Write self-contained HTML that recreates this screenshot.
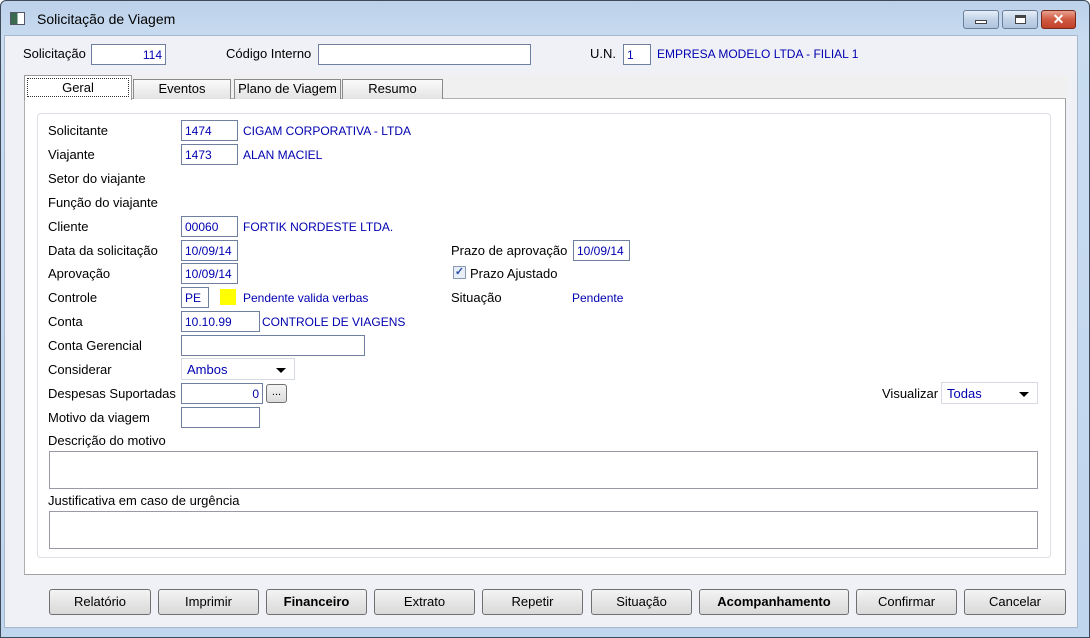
<!DOCTYPE html>
<html><head><meta charset="utf-8"><style>
*{margin:0;padding:0;box-sizing:border-box}
body{width:1090px;height:638px;overflow:hidden;background:#fff;font-family:"Liberation Sans",sans-serif;font-size:12px;color:#000;position:relative}
.a{position:absolute;white-space:nowrap}
.frame{position:absolute;left:0;top:0;width:1090px;height:638px;background:linear-gradient(#bcd1ea,#c9dcf0 40px,#c0d5ee);border:1px solid #3c4a5a;border-radius:6px 6px 0 0}
.body{position:absolute;left:4px;top:35px;width:1074px;height:593px;background:#f0f0f7;border:1px solid #a8b8cc}
.in{position:absolute;height:21px;background:#fff;border:1px solid #6f7fa0;color:#0000b0;padding:1px 3px;line-height:18px}
.bl{color:#0000b0}
.btn{position:absolute;top:589px;height:26px;border:1px solid #707070;border-radius:3px;background:linear-gradient(#f4f4f4,#e6e6e6 50%,#d9d9d9);text-align:center;line-height:24px;font-size:13px}
.tab{position:absolute;top:79px;height:20px;border:1px solid #8a8a8a;border-bottom:none;background:linear-gradient(#fafafa,#e3e3e3);text-align:center;line-height:18px;font-size:13px}
.lab{position:absolute;left:48px;font-size:13px}
.dd{position:absolute;height:22px;background:#fff;border:1px solid #d6dbe3;color:#0000b0;padding:3px 5px;font-size:13px}
.dd:after{content:"";position:absolute;right:8px;top:9px;border-left:5px solid transparent;border-right:5px solid transparent;border-top:5px solid #000}
.wb{position:absolute;top:10px;height:19px;border:1px solid #6c7f98;border-radius:3px;background:linear-gradient(#e6eef8,#c2d3e8 50%,#aec4de)}
</style></head><body>
<div class="frame"></div>
<div class="a" style="left:10px;top:12px;width:15px;height:13px;border:1px solid #556;background:linear-gradient(90deg,#3a6a50 50%,#fff 50%)"></div>
<div class="a" style="left:37px;top:11px;font-size:14px;color:#000">Solicitação de Viagem</div>
<div class="wb" style="left:963px;width:36px"><div class="a" style="left:11px;top:9px;width:12px;height:4px;border:1px solid #444;background:#fff"></div></div>
<div class="wb" style="left:1002px;width:36px"><div class="a" style="left:12px;top:4px;width:11px;height:9px;border:1px solid #444;border-top-width:3px;background:#fff"></div></div>
<div class="wb" style="left:1041px;width:35px;background:linear-gradient(#e8a090,#d05a40 50%,#c04028);border-color:#7a2a1a;color:#fff;font-weight:bold;text-align:center;line-height:16px;font-size:14px">✕</div>
<div class="body"></div>
<div class="a" style="left:23px;top:46px;font-size:13px">Solicitação</div>
<div class="in" style="left:91px;top:44px;width:75px;text-align:right">114</div>
<div class="a" style="left:226px;top:46px;font-size:13px">Código Interno</div>
<div class="in" style="left:318px;top:44px;width:213px"></div>
<div class="a" style="left:590px;top:46px;font-size:13px">U.N.</div>
<div class="in" style="left:623px;top:44px;width:28px">1</div>
<div class="a bl" style="left:657px;top:47px">EMPRESA MODELO LTDA - FILIAL 1</div>
<div class="a" style="left:24px;top:75px;width:1044px;height:24px;background:#f0f0f0"></div>
<div class="a" style="left:24px;top:98px;width:1042px;height:477px;background:#fff;border:1px solid #b0b0b0;border-right-color:#a0a0a0;border-bottom-color:#a0a0a0"></div>
<div class="tab" style="left:133px;width:98px">Eventos</div>
<div class="tab" style="left:234px;width:107px">Plano de Viagem</div>
<div class="tab" style="left:342px;width:101px">Resumo</div>
<div class="tab" style="left:24px;top:75px;width:108px;height:25px;background:#fff;border-color:#999"><div style="margin:2px;border:1px dotted #333;height:19px;line-height:17px">Geral</div></div>
<div class="a" style="left:37px;top:113px;width:1014px;height:445px;border:1px solid #dcdfe6;border-radius:4px"></div>
<div class="lab" style="top:123px">Solicitante</div>
<div class="in" style="left:181px;top:120px;width:57px">1474</div>
<div class="a bl" style="left:243px;top:124px">CIGAM CORPORATIVA - LTDA</div>
<div class="lab" style="top:147px">Viajante</div>
<div class="in" style="left:181px;top:144px;width:57px">1473</div>
<div class="a bl" style="left:243px;top:148px">ALAN MACIEL</div>
<div class="lab" style="top:171px">Setor do viajante</div>
<div class="lab" style="top:195px">Função do viajante</div>
<div class="lab" style="top:219px">Cliente</div>
<div class="in" style="left:181px;top:216px;width:57px">00060</div>
<div class="a bl" style="left:243px;top:220px">FORTIK NORDESTE LTDA.</div>
<div class="lab" style="top:243px">Data da solicitação</div>
<div class="in" style="left:181px;top:240px;width:57px">10/09/14</div>
<div class="a" style="left:451px;top:243px;font-size:13px">Prazo de aprovação</div>
<div class="in" style="left:573px;top:240px;width:57px">10/09/14</div>
<div class="lab" style="top:266px">Aprovação</div>
<div class="in" style="left:181px;top:263px;width:57px">10/09/14</div>
<div class="a" style="left:453px;top:266px;width:13px;height:13px;border:1px solid #8a9ab0;background:#e8eef8;color:#2a50a0;font-size:11px;line-height:11px;text-align:center;font-weight:bold">✓</div>
<div class="a" style="left:470px;top:266px;font-size:13px">Prazo Ajustado</div>
<div class="lab" style="top:290px">Controle</div>
<div class="in" style="left:181px;top:287px;width:28px">PE</div>
<div class="a" style="left:220px;top:289px;width:16px;height:16px;background:#ffff00"></div>
<div class="a bl" style="left:243px;top:291px">Pendente valida verbas</div>
<div class="a" style="left:451px;top:290px;font-size:13px">Situação</div>
<div class="a bl" style="left:572px;top:291px">Pendente</div>
<div class="lab" style="top:314px">Conta</div>
<div class="in" style="left:181px;top:311px;width:79px">10.10.99</div>
<div class="a bl" style="left:262px;top:315px">CONTROLE DE VIAGENS</div>
<div class="lab" style="top:338px">Conta Gerencial</div>
<div class="in" style="left:181px;top:335px;width:184px"></div>
<div class="lab" style="top:362px">Considerar</div>
<div class="dd" style="left:181px;top:358px;width:114px">Ambos</div>
<div class="lab" style="top:386px">Despesas Suportadas</div>
<div class="in" style="left:181px;top:383px;width:82px;text-align:right">0</div>
<div class="a" style="left:266px;top:384px;width:21px;height:19px;border:1px solid #707070;border-radius:3px;background:linear-gradient(#f4f4f4,#dcdcdc);text-align:center;line-height:14px;font-size:11px">...</div>
<div class="a" style="left:882px;top:386px;font-size:13px">Visualizar</div>
<div class="dd" style="left:941px;top:382px;width:97px">Todas</div>
<div class="lab" style="top:410px">Motivo da viagem</div>
<div class="in" style="left:181px;top:407px;width:79px"></div>
<div class="lab" style="top:433px">Descrição do motivo</div>
<div class="a" style="left:49px;top:451px;width:989px;height:38px;border:1px solid #9a9aa6;background:#fff"></div>
<div class="lab" style="top:493px">Justificativa em caso de urgência</div>
<div class="a" style="left:49px;top:511px;width:989px;height:38px;border:1px solid #9a9aa6;background:#fff"></div>
<div class="btn" style="left:49px;width:102px">Relatório</div>
<div class="btn" style="left:158px;width:101px">Imprimir</div>
<div class="btn" style="left:266px;width:101px;font-weight:bold">Financeiro</div>
<div class="btn" style="left:374px;width:101px">Extrato</div>
<div class="btn" style="left:482px;width:101px">Repetir</div>
<div class="btn" style="left:591px;width:101px">Situação</div>
<div class="btn" style="left:699px;width:150px;font-weight:bold">Acompanhamento</div>
<div class="btn" style="left:856px;width:101px">Confirmar</div>
<div class="btn" style="left:964px;width:102px">Cancelar</div>
</body></html>
